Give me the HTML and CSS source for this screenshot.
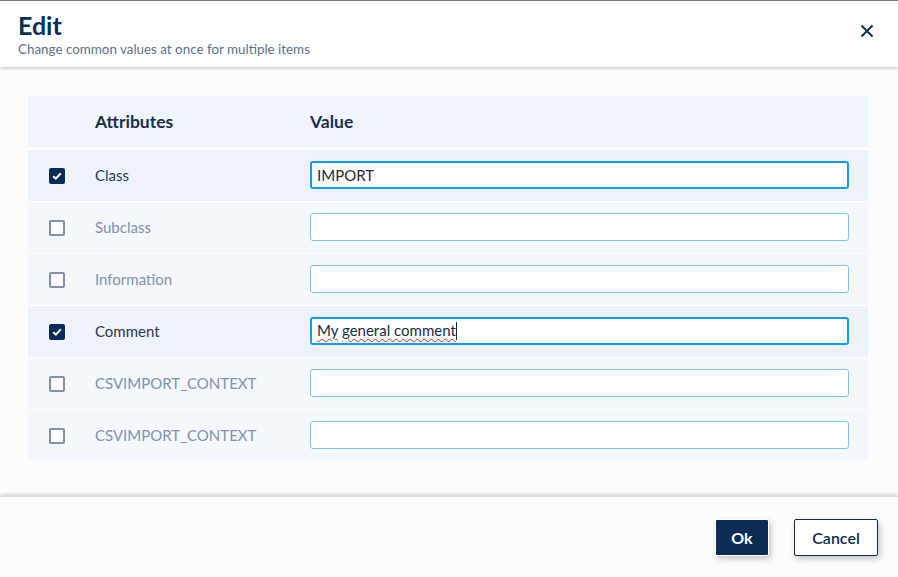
FILE: index.html
```html
<!DOCTYPE html>
<html lang="en">
<head>
<meta charset="utf-8">
<title>Edit</title>
<link rel="stylesheet" href="styles.css">
</head>
<body>
<div class="dialog">
  <header class="dlg-head">
    <div class="titles">
      <h1 class="title">Edit</h1>
      <p class="subtitle">Change common values at once for multiple items</p>
    </div>
    <button class="close" aria-label="Close">
      <svg width="14" height="14" viewBox="0 0 14 14"><path d="M1.5 1.5 L12.5 12.5 M12.5 1.5 L1.5 12.5" stroke="#0b2d55" stroke-width="2" fill="none"/></svg>
    </button>
  </header>
  <main class="dlg-body">
    <div class="table">
      <div class="row head-row">
        <div class="cell"></div>
        <div class="cell th">Attributes</div>
        <div class="cell th">Value</div>
      </div>
      <div class="row on">
        <div class="cell"><span class="cb checked"><svg width="10" height="8" viewBox="0 0 10 8"><path d="M1.2 4.2 L3.8 6.6 L8.8 1.2" stroke="#fff" stroke-width="2" fill="none"/></svg></span></div>
        <div class="cell label">Class</div>
        <div class="cell"><div class="input focus"><span class="val">IMPORT</span></div></div>
      </div>
      <div class="row">
        <div class="cell"><span class="cb"></span></div>
        <div class="cell label">Subclass</div>
        <div class="cell"><div class="input"></div></div>
      </div>
      <div class="row">
        <div class="cell"><span class="cb"></span></div>
        <div class="cell label">Information</div>
        <div class="cell"><div class="input"></div></div>
      </div>
      <div class="row on">
        <div class="cell"><span class="cb checked"><svg width="10" height="8" viewBox="0 0 10 8"><path d="M1.2 4.2 L3.8 6.6 L8.8 1.2" stroke="#fff" stroke-width="2" fill="none"/></svg></span></div>
        <div class="cell label">Comment</div>
        <div class="cell"><div class="input focus"><span class="val"><span class="sp">My</span> <span class="sp">general comment</span><span class="caret"></span></span></div></div>
      </div>
      <div class="row">
        <div class="cell"><span class="cb"></span></div>
        <div class="cell label">CSVIMPORT_CONTEXT</div>
        <div class="cell"><div class="input"></div></div>
      </div>
      <div class="row">
        <div class="cell"><span class="cb"></span></div>
        <div class="cell label">CSVIMPORT_CONTEXT</div>
        <div class="cell"><div class="input"></div></div>
      </div>
    </div>
  </main>
  <footer class="dlg-foot">
    <button class="btn primary">Ok</button>
    <button class="btn secondary">Cancel</button>
  </footer>
</div>
</body>
</html>
```
FILE: styles.css
```css
* { box-sizing: border-box; }
html, body { margin: 0; padding: 0; }
body {
  font-family: "Lato", "Noto Sans", sans-serif;
  background: #fcfcfc;
  color: #1b2d45;
}
.dialog {
  width: 898px;
  height: 577px;
  display: flex;
  flex-direction: column;
  border-top: 1px solid #777;
  background: #fcfcfc;
}
.dlg-head {
  height: 66px;
  flex: none;
  background: #fff;
  display: flex;
  justify-content: space-between;
  align-items: flex-start;
  padding: 9px 24px 0 18px;
  box-shadow: 0 2px 3px rgba(0,0,0,0.18);
  position: relative;
  z-index: 1;
}
.title {
  margin: 0;
  font-size: 25px;
  line-height: 30px;
  font-weight: 700;
  color: #0b2d55;
}
.subtitle {
  margin: 1px 0 0;
  font-size: 13.4px;
  line-height: 16px;
  color: #5b7090;
}
.close {
  margin-top: 14px;
  border: 0;
  background: none;
  padding: 0;
  width: 14px;
  height: 14px;
  display: flex;
}
.dlg-body {
  flex: 1;
  padding: 29px 30px 0 28px;
}
.table {
  display: flex;
  flex-direction: column;
  gap: 1px;
  background: #fff;
}
.row {
  display: grid;
  grid-template-columns: 67px 215px 1fr;
  height: 51px;
  align-items: center;
  background: #f4f7fb;
  padding-right: 19px;
}
.row.on { background: #eef3fb; }
.head-row {
  background: #f0f4fc;
  height: 51px;
  margin-bottom: 2px;
}
.cell { display: flex; align-items: center; }
.th {
  font-size: 17.5px;
  font-weight: 700;
  color: #1b2f4a;
}
.label {
  font-size: 15px;
  color: #8093ab;
  padding-bottom: 1px;
}
.row.on .label { color: #2a3a50; }
.cb {
  margin-left: 21px;
  width: 16px;
  height: 16px;
  border: 2px solid #7f90a8;
  border-radius: 2px;
  background: #fff;
  display: flex;
  align-items: center;
  justify-content: center;
}
.cb.checked {
  background: #0b2d55;
  border-color: #0b2d55;
}
.input {
  width: 100%;
  height: 28px;
  margin-bottom: 2px;
  border: 1.5px solid #78c2fb;
  border-radius: 3px;
  background: #fff;
  font-size: 15px;
  color: #1b2a3d;
  padding: 0 5px;
  display: flex;
  align-items: center;
}
.val { white-space: pre; }
.input.focus { border: 2px solid #0b9dff; }
.sp { text-decoration: underline wavy #e02020; text-decoration-thickness: 1px; text-underline-offset: 2px; }
.caret {
  display: inline-block;
  width: 1px;
  height: 18px;
  vertical-align: -4px;
  background: #0b2d55;
}
.dlg-foot {
  height: 81px;
  flex: none;
  background: #fcfcfc;
  box-shadow: 0 -2px 3px rgba(0,0,0,0.14);
  border-top: 1px solid #ddd;
  display: flex;
  justify-content: flex-end;
  align-items: flex-start;
  gap: 25px;
  padding: 22px 20px 0 0;
}
.btn {
  height: 37px;
  font-family: inherit;
  font-size: 16px;
  border-radius: 2px;
  box-shadow: 2px 3px 6px rgba(0,0,0,0.22);
}
.primary {
  width: 54px;
  background: #0b2d55;
  color: #fff;
  font-weight: 700;
  border: 1px solid #fff;
}
.secondary {
  width: 84px;
  background: #fff;
  color: #0b2d55;
  font-weight: 600;
  border: 1px solid #0b2d55;
}
```
